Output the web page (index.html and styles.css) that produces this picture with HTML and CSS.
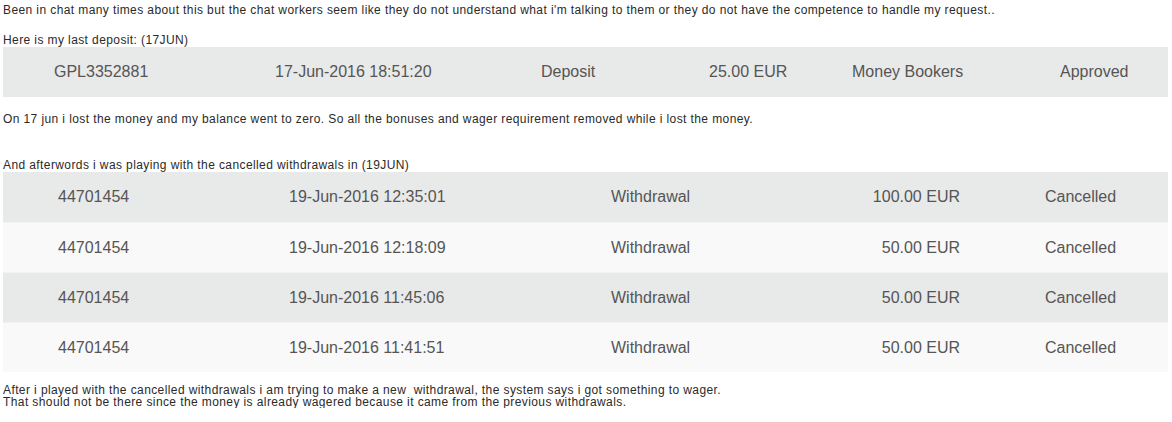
FILE: index.html
```html
<!DOCTYPE html>
<html>
<head>
<meta charset="utf-8">
<link rel="stylesheet" href="styles.css">
</head>
<body>
<p class="txt first">Been in chat many times about this but the chat workers seem like they do not understand what i'm talking to them or they do not have the competence to handle my request..</p>
<p class="txt lead">Here is my last deposit: (17JUN)</p>
<div class="table t-deposit">
  <div class="row gray">
    <span>GPL3352881</span><span>17-Jun-2016 18:51:20</span><span>Deposit</span><span>25.00 EUR</span><span>Money Bookers</span><span>Approved</span>
  </div>
</div>
<p class="txt after-dep">On 17 jun i lost the money and my balance went to zero. So all the bonuses and wager requirement removed while i lost the money.</p>
<p class="txt lead2">And afterwords i was playing with the cancelled withdrawals in (19JUN)</p>
<div class="table t-wd">
  <div class="row gray"><span>44701454</span><span>19-Jun-2016 12:35:01</span><span>Withdrawal</span><span class="amt">100.00 EUR</span><span>Cancelled</span></div>
  <div class="row light"><span>44701454</span><span>19-Jun-2016 12:18:09</span><span>Withdrawal</span><span class="amt">50.00 EUR</span><span>Cancelled</span></div>
  <div class="row gray"><span>44701454</span><span>19-Jun-2016 11:45:06</span><span>Withdrawal</span><span class="amt">50.00 EUR</span><span>Cancelled</span></div>
  <div class="row light"><span>44701454</span><span>19-Jun-2016 11:41:51</span><span>Withdrawal</span><span class="amt">50.00 EUR</span><span>Cancelled</span></div>
</div>
<p class="txt last">After i played with the cancelled withdrawals i am trying to make a new &nbsp;withdrawal, the system says i got something to wager.<br>That should not be there since the money is already wagered because it came from the previous withdrawals.</p>
</body>
</html>
```
FILE: styles.css
```css
html, body {
  margin: 0;
  padding: 0;
  background: #ffffff;
}
body {
  padding: 3px 4px 0 3px;
  font-family: "Liberation Sans", Arial, sans-serif;
  font-size: 12px;
  color: #2a2a2a;
}
.txt {
  margin: 0;
  line-height: 14px;
  letter-spacing: 0.4px;
  white-space: nowrap;
}
.lead { margin-top: 16px; }
.after-dep { margin-top: 15px; }
.lead2 { margin-top: 32px; }
.last { margin-top: 12px; line-height: 12px; }

.table {
  font-size: 16px;
  color: #555555;
}
.row {
  display: grid;
  height: 50px;
  align-items: center;
  white-space: nowrap;
}
.gray { background: #e8e9e9; }
.light { background: #f9f9f9; }

.t-deposit .row {
  padding-left: 51px;
  grid-template-columns: 221px 266px 168px 143px 208px 1fr;
}
.t-wd .row {
  padding-left: 55px;
  grid-template-columns: 231px 322px 250px 184px 1fr;
}
.t-wd .row + .row {
  border-top: 1px solid #f1f2f2;
  height: 49px;
}
.t-wd .amt {
  text-align: right;
  padding-right: 85px;
}
```
